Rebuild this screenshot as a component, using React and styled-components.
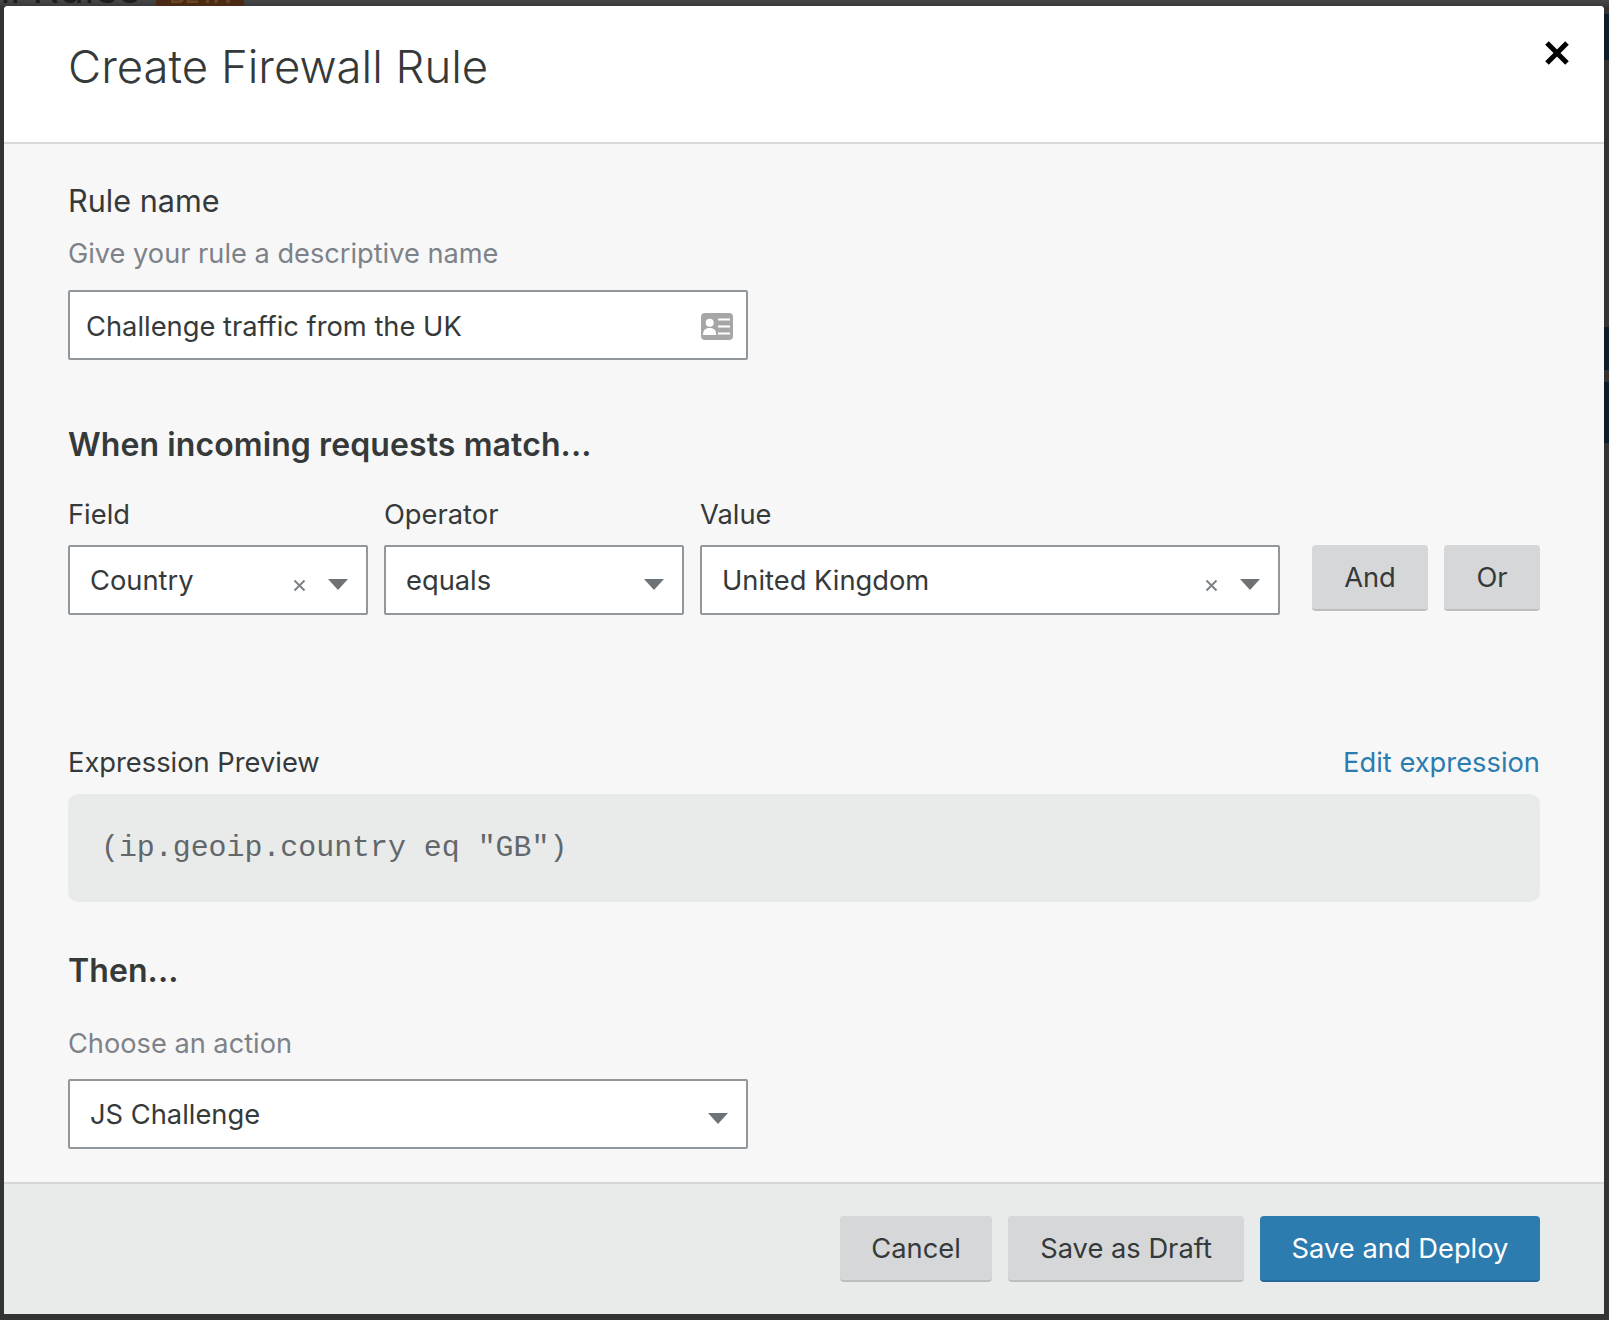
import React from "react";
import styled, { createGlobalStyle } from "styled-components";

const GlobalStyle = createGlobalStyle`
  html, body {
    margin: 0;
    padding: 0;
    background: #333;
  }
  body {
    font-family: Inter, "Noto Sans", sans-serif;
    color: #36393a;
  }
`;

const Backdrop = styled.div`
  position: relative;
  width: 1609px;
  height: 1320px;
  padding: 6px 5px 6px 4px;
  box-sizing: border-box;
  background: linear-gradient(#464646 0, #3a3a3a 6px, #333 7px);
  overflow: hidden;
`;

// dimmed page behind the modal, only its edges show
const PageTitle = styled.div`
  position: absolute;
  top: -38px;
  left: 0;
  width: 141px;
  display: flex;
  justify-content: flex-end;
  white-space: nowrap;
  font-size: 42px;
  line-height: 52px;
  color: #1d1d1d;
`;

const PageBadge = styled.div`
  position: absolute;
  top: -17px;
  left: 156px;
  width: 88px;
  height: 23px;
  overflow: hidden;
  background: #4a2a14;
  color: #6b4522;
  font-size: 24px;
  font-weight: 600;
  line-height: 24px;
  text-align: center;
`;

const SidePatch = styled.div`
  position: absolute;
  left: 1604px;
  top: ${(p) => p.$top}px;
  width: 5px;
  height: ${(p) => p.$height}px;
  background: #0c1c29;
`;

const Modal = styled.div`
  position: relative;
  height: 100%;
  display: flex;
  flex-direction: column;
  background: #f7f7f7;
  border-radius: 4px 4px 0 0;
  overflow: hidden;
`;

const Header = styled.header`
  height: 138px;
  flex: none;
  box-sizing: border-box;
  display: flex;
  justify-content: space-between;
  padding: 35px 35px 0 64px;
  background: #fff;
  border-bottom: 2px solid #d9d9d9;
`;

const Title = styled.h1`
  margin: 0;
  font-size: 45.5px;
  font-weight: 350;
  line-height: 52px;
  color: #36393a;
`;

const CloseButton = styled.button`
  width: 24px;
  height: 24px;
  padding: 0;
  border: 0;
  background: none;
`;

const Body = styled.div`
  flex: 1;
  padding: 40px 64px 0;
`;

const Label = styled.div`
  font-size: ${(p) => p.$size || 27.3}px;
  line-height: 34px;
  color: #36393a;
`;

const Hint = styled.div`
  margin-top: ${(p) => p.$top}px;
  font-size: 27.2px;
  line-height: 32px;
  color: #7d8288;
`;

const Box = styled.div`
  box-sizing: border-box;
  height: 70px;
  width: ${(p) => p.$width}px;
  margin-top: ${(p) => p.$top || 0}px;
  display: flex;
  align-items: center;
  padding: 0 18px 0 20px;
  background: #fff;
  border: 2px solid #92979b;
  border-radius: 2px;
  font-size: 27.3px;
`;

const InputBox = styled(Box)`
  padding: 2px 13px 0 16px;
`;

const BoxText = styled.span`
  flex: 1;
`;

const Heading = styled.h2`
  margin: ${(p) => p.$top}px 0 0;
  font-size: 32px;
  font-weight: 600;
  line-height: 40px;
  letter-spacing: 0.1px;
`;

const Row = styled.div`
  display: flex;
  gap: 16px;
  margin-top: 33px;
`;

const Column = styled.div`
  display: flex;
  flex-direction: column;
  gap: 13px;
`;

const Actions = styled.div`
  display: flex;
  gap: 16px;
  margin-left: 16px;
  margin-top: 47px;
`;

const Button = styled.button`
  box-sizing: border-box;
  height: 66px;
  width: ${(p) => p.$width}px;
  padding: 0;
  font-family: inherit;
  font-size: 27.3px;
  color: ${(p) => (p.$primary ? "#fff" : "#36393a")};
  background: ${(p) => (p.$primary ? "#2c7cb0" : "#d5d7d8")};
  border: 0;
  border-bottom: 2px solid ${(p) => (p.$primary ? "#25689a" : "#bcbec0")};
  border-radius: 4px;
`;

const PreviewHead = styled.div`
  display: flex;
  justify-content: space-between;
  align-items: center;
  margin-top: 131px;
`;

const EditLink = styled.a`
  font-size: 27.3px;
  line-height: 34px;
  color: #2c7cb0;
`;

const Preview = styled.div`
  box-sizing: border-box;
  margin-top: 14px;
  height: 108px;
  padding: 0 33px;
  display: flex;
  align-items: center;
  border-radius: 10px;
  background: #e9ebea;
  font-family: "Liberation Mono", monospace;
  font-size: 29.9px;
  color: #62676b;
`;

const Footer = styled.footer`
  height: 132px;
  flex: none;
  box-sizing: border-box;
  display: flex;
  justify-content: flex-end;
  gap: 16px;
  padding: 32px 64px 0;
  background: #e9ebea;
  border-top: 2px solid #d5d7d6;
`;

const Caret = styled.svg`
  margin-top: 8px;
`;

const Clear = styled.svg`
  margin: 10px 22px 0 0;
`;

const CaretIcon = () => (
  <Caret width="20" height="11" viewBox="0 0 20 11">
    <path d="M0 0h20L10 11z" fill="#6d7276" />
  </Caret>
);

const ClearIcon = () => (
  <Clear width="13" height="13" viewBox="0 0 13 13">
    <path d="M1.5 1.5l10 10M11.5 1.5l-10 10" stroke="#7d8288" strokeWidth="2" />
  </Clear>
);

const CardIcon = () => (
  <svg width="32" height="27" viewBox="0 0 32 27">
    <rect width="32" height="27" rx="4" fill="#a6a6a6" />
    <circle cx="8.7" cy="9.7" r="4" fill="#fff" />
    <path d="M2 22c0-5 2.500-7 6.700-7s6.500 2 6.500 7z" fill="#fff" />
    <path d="M17 6.500h12M17 13.500h12M17 20.500h12" stroke="#fff" strokeWidth="2" />
  </svg>
);

export default function App() {
  return (
    <Backdrop>
      <GlobalStyle />
      <PageTitle>Firewall Rules</PageTitle>
      <PageBadge>BETA</PageBadge>
      <SidePatch $top={14} $height={46} />
      <SidePatch $top={327} $height={43} />
      <SidePatch $top={382} $height={61} />
      <Modal>
        <Header>
          <Title>Create Firewall Rule</Title>
          <CloseButton aria-label="Close">
            <svg width="24" height="24" viewBox="0 0 24 24">
              <path d="M2 2l20 20M22 2L2 22" stroke="#000" strokeWidth="5" />
            </svg>
          </CloseButton>
        </Header>
        <Body>
          <Label $size={30.6}>Rule name</Label>
          <Hint $top={20}>Give your rule a descriptive name</Hint>
          <InputBox $width={680} $top={20}>
            <BoxText>Challenge traffic from the UK</BoxText>
            <CardIcon />
          </InputBox>
          <Heading $top={65}>When incoming requests match...</Heading>
          <Row>
            <Column>
              <Label>Field</Label>
              <Box $width={300}>
                <BoxText>Country</BoxText>
                <ClearIcon />
                <CaretIcon />
              </Box>
            </Column>
            <Column>
              <Label>Operator</Label>
              <Box $width={300}>
                <BoxText>equals</BoxText>
                <CaretIcon />
              </Box>
            </Column>
            <Column>
              <Label>Value</Label>
              <Box $width={580}>
                <BoxText>United Kingdom</BoxText>
                <ClearIcon />
                <CaretIcon />
              </Box>
            </Column>
            <Actions>
              <Button $width={116}>And</Button>
              <Button $width={96}>Or</Button>
            </Actions>
          </Row>
          <PreviewHead>
            <Label>Expression Preview</Label>
            <EditLink>Edit expression</EditLink>
          </PreviewHead>
          <Preview>(ip.geoip.country eq "GB")</Preview>
          <Heading $top={49}>Then...</Heading>
          <Hint $top={37}>Choose an action</Hint>
          <Box $width={680} $top={19}>
            <BoxText>JS Challenge</BoxText>
            <CaretIcon />
          </Box>
        </Body>
        <Footer>
          <Button $width={152}>Cancel</Button>
          <Button $width={236}>Save as Draft</Button>
          <Button $primary $width={280}>Save and Deploy</Button>
        </Footer>
      </Modal>
    </Backdrop>
  );
}
